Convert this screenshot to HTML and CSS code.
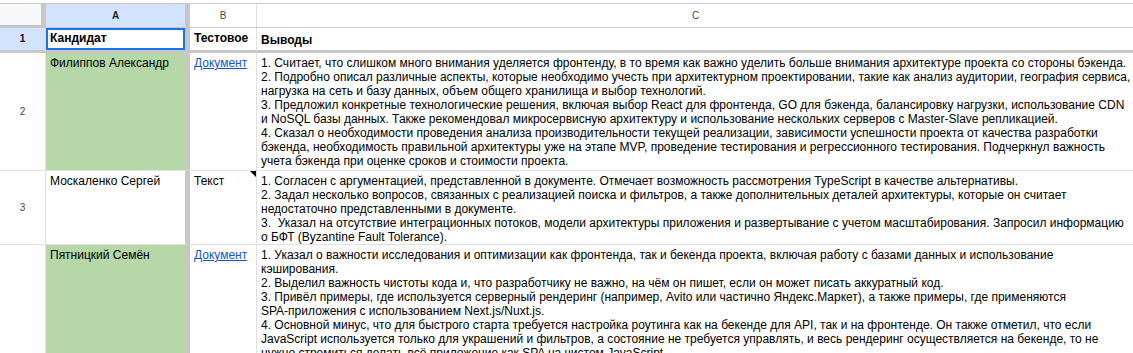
FILE: index.html
```html
<!DOCTYPE html>
<html lang="ru">
<head>
    <meta charset="UTF-8">
    <meta name="viewport" content="width=device-width, initial-scale=1.0">
    <title>Кандидаты</title>
    <link rel="stylesheet" href="styles.css">
</head>
<body>
    <div class="sheet">
        <div class="top-edge"></div>

        <div class="row head-row">
            <div class="cell corner"></div>
            <div class="cell col-a head selected-head">A</div>
            <div class="cell col-b head">B</div>
            <div class="cell col-c head">C</div>
        </div>

        <div class="row row-1">
            <div class="cell rownum selected-head">1</div>
            <div class="cell col-a active">Кандидат</div>
            <div class="cell col-b">Тестовое</div>
            <div class="cell col-c title-c">Выводы</div>
        </div>

        <div class="row row-2">
            <div class="cell rownum">2</div>
            <div class="cell col-a green">Филиппов Александр</div>
            <div class="cell col-b"><a href="#">Документ</a></div>
            <div class="cell col-c">
                1. Считает, что слишком много внимания уделяется фронтенду, в то время как важно уделить больше внимания архитектуре проекта со стороны бэкенда.<br>
                2. Подробно описал различные аспекты, которые необходимо учесть при архитектурном проектировании, такие как анализ аудитории, география сервиса, нагрузка на сеть и базу данных, объем общего хранилища и выбор технологий.<br>
                3. Предложил конкретные технологические решения, включая выбор React для фронтенда, GO для бэкенда, балансировку нагрузки, использование CDN и NoSQL базы данных. Также рекомендовал микросервисную архитектуру и использование нескольких серверов с Master-Slave репликацией.<br>
                4. Сказал о необходимости проведения анализа производительности текущей реализации, зависимости успешности проекта от качества разработки бэкенда, необходимость правильной архитектуры уже на этапе MVP, проведение тестирования и регрессионного тестирования. Подчеркнул важность учета бэкенда при оценке сроков и стоимости проекта.
            </div>
        </div>

        <div class="row row-3">
            <div class="cell rownum">3</div>
            <div class="cell col-a">Москаленко Сергей</div>
            <div class="cell col-b has-note">Текст</div>
            <div class="cell col-c">
                1. Согласен с аргументацией, представленной в документе. Отмечает возможность рассмотрения TypeScript в качестве альтернативы.<br>
                2. Задал несколько вопросов, связанных с реализацией поиска и фильтров, а также дополнительных деталей архитектуры, которые он считает недостаточно представленными в документе.<br>
                3.&nbsp; Указал на отсутствие интеграционных потоков, модели архитектуры приложения и развертывание с учетом масштабирования. Запросил информацию о БФТ (Byzantine Fault Tolerance).
            </div>
        </div>

        <div class="row row-4">
            <div class="cell rownum">4</div>
            <div class="cell col-a green">Пятницкий Семён</div>
            <div class="cell col-b"><a href="#">Документ</a></div>
            <div class="cell col-c">
                1. Указал о важности исследования и оптимизации как фронтенда, так и бекенда проекта, включая работу с базами данных и использование кэширования.<br>
                2. Выделил важность чистоты кода и, что разработчику не важно, на чём он пишет, если он может писать аккуратный код.<br>
                3. Привёл примеры, где используется серверный рендеринг (например, Avito или частично Яндекс.Маркет), а также примеры, где применяются <span class="nowrap">SPA-приложения</span> с использованием Next.js/Nuxt.js.<br>
                4. Основной минус, что для быстрого старта требуется настройка роутинга как на бекенде для API, так и на фронтенде. Он также отметил, что если JavaScript используется только для украшений и фильтров, а состояние не требуется управлять, и весь рендеринг осуществляется на бекенде, то не нужно стремиться делать всё приложение как SPA на чистом JavaScript.
            </div>
        </div>
    </div>
</body>
</html>
```

FILE: styles.css
```css
body {
    margin: 0;
    padding: 0;
    background: #fff;
    overflow: hidden;
    font-family: "Liberation Sans", Arial, sans-serif;
    color: #000;
}

.sheet {
    width: 1140px;
    height: 353px;
    overflow: hidden;
}

.top-edge {
    height: 3px;
    border-bottom: 1px solid #c7c7c7;
}

.row {
    display: flex;
}

.cell {
    box-sizing: border-box;
    flex: none;
    font-size: 12px;
    line-height: 14px;
    padding: 3px 3px 0 4px;
    border-right: 1px solid #e1e1e1;
    border-bottom: 1px solid #e1e1e1;
    overflow: hidden;
}

.nowrap {
    white-space: nowrap;
}

/* columns */
.rownum,
.corner {
    width: 46px;
}

.col-a {
    width: 144px;
    border-right: 5px solid #c7c7c7;
}

.col-b {
    width: 67px;
}

.col-c {
    width: 878px;
}

/* column letters */
.head-row .cell {
    height: 24px;
    padding: 0;
    font-size: 10px;
    line-height: 24px;
    text-align: center;
    color: #444746;
    border-bottom-color: #c7c7c7;
}

.head-row .corner {
    background: #f8f9fa;
    border-right: 5px solid #c7c7c7;
    border-bottom: 3px solid #c7c7c7;
}

.head-row .col-a {
    border-right-color: #c7c7c7;
}

.selected-head {
    background: #d3e3fd;
    font-weight: bold;
}

.head-row .selected-head {
    color: #1f1f1f;
}

/* row numbers */
.rownum {
    display: flex;
    align-items: center;
    justify-content: center;
    padding: 0;
    font-size: 10px;
    color: #444746;
}

/* header row, frozen */
.row-1 .cell {
    height: 25px;
    padding-top: 3px;
    font-weight: bold;
    border-bottom: 3px solid #c7c7c7;
}

.row-1 .rownum {
    padding-top: 0;
    color: #0b0b0b;
}

.row-1 .title-c {
    padding-top: 5px;
}

.active {
    box-shadow: inset 0 0 0 2px #1a73e8;
}

.row-2 .cell {
    height: 118px;
}

.row-3 .cell {
    height: 74px;
}

.row-4 .cell {
    height: 280px;
}

.green {
    background: #b6d7a8;
}

a {
    color: #1155cc;
}

.has-note {
    position: relative;
}

.has-note::after {
    content: "";
    position: absolute;
    top: 0;
    right: 0;
    border-top: 6px solid #000;
    border-left: 6px solid transparent;
}
```
